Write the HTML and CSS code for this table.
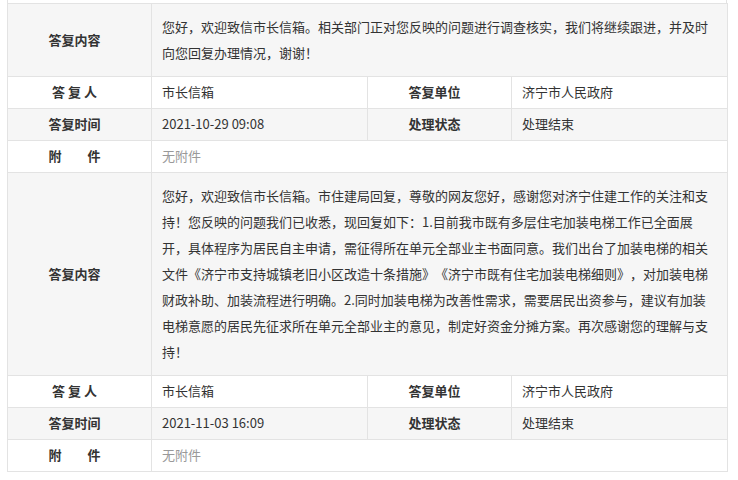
FILE: index.html
```html
<!DOCTYPE html>
<html lang="zh-CN">
<head>
    <meta charset="UTF-8">
    <meta name="viewport" content="width=device-width, initial-scale=1.0">
    <title>答复信息</title>
    <link rel="stylesheet" href="styles.css">
</head>
<body>
    <div class="container">
        <div class="top-edge"></div>
        <table class="reply-table">
            <colgroup>
                <col class="col-label">
                <col class="col-value">
                <col class="col-label">
                <col class="col-value">
            </colgroup>
            <!-- 第一次答复 -->
            <tr class="row-gray">
                <td class="label">答复内容</td>
                <td class="content" colspan="3"><div class="content-text">您好，欢迎致信市长信箱。相关部门正对您反映的问题进行调查核实，我们将继续跟进，并及时向您回复办理情况，谢谢！</div></td>
            </tr>
            <tr class="row-white small">
                <td class="label">答 复 人</td>
                <td class="value">市长信箱</td>
                <td class="label">答复单位</td>
                <td class="value">济宁市人民政府</td>
            </tr>
            <tr class="row-gray small">
                <td class="label">答复时间</td>
                <td class="value">2021-10-29 09:08</td>
                <td class="label">处理状态</td>
                <td class="value">处理结束</td>
            </tr>
            <tr class="row-white small">
                <td class="label">附　　件</td>
                <td class="value muted" colspan="3">无附件</td>
            </tr>
            <!-- 第二次答复 -->
            <tr class="row-gray">
                <td class="label">答复内容</td>
                <td class="content" colspan="3"><div class="content-text">您好，欢迎致信市长信箱。市住建局回复，尊敬的网友您好，感谢您对济宁住建工作的关注和支持！您反映的问题我们已收悉，现回复如下：1.目前我市既有多层住宅加装电梯工作已全面展开，具体程序为居民自主申请，需征得所在单元全部业主书面同意。我们出台了加装电梯的相关文件《济宁市支持城镇老旧小区改造十条措施》《济宁市既有住宅加装电梯细则》，对加装电梯财政补助、加装流程进行明确。2.同时加装电梯为改善性需求，需要居民出资参与，建议有加装电梯意愿的居民先征求所在单元全部业主的意见，制定好资金分摊方案。再次感谢您的理解与支持！</div></td>
            </tr>
            <tr class="row-white small">
                <td class="label">答 复 人</td>
                <td class="value">市长信箱</td>
                <td class="label">答复单位</td>
                <td class="value">济宁市人民政府</td>
            </tr>
            <tr class="row-gray small">
                <td class="label">答复时间</td>
                <td class="value">2021-11-03 16:09</td>
                <td class="label">处理状态</td>
                <td class="value">处理结束</td>
            </tr>
            <tr class="row-white small">
                <td class="label">附　　件</td>
                <td class="value muted" colspan="3">无附件</td>
            </tr>
        </table>
    </div>
</body>
</html>
```

FILE: styles.css
```css
body {
    margin: 0;
    background: #fff;
    font-family: "Noto Sans CJK SC", "Noto Sans", sans-serif;
    font-size: 13px;
    color: #333;
}
.container {
    padding-left: 7px;
}
.top-edge {
    width: 720px;
    height: 3px;
    border-left: 1px solid #e3e3e3;
    border-right: 1px solid #e3e3e3;
    box-sizing: border-box;
}
.reply-table {
    width: 720px;
    table-layout: fixed;
    border-collapse: collapse;
    text-spacing-trim: space-all;
}
.col-label {
    width: 144px;
}
.col-value {
    width: 216px;
}
.reply-table td {
    border: 1px solid #e3e3e3;
    line-height: 26px;
    padding: 10px 10px;
    vertical-align: middle;
}
.reply-table tr.small td {
    padding-top: 2px;
    padding-bottom: 3px;
}
.row-gray {
    background: #f6f6f6;
}
.row-white {
    background: #fff;
}
.reply-table td.label {
    font-weight: bold;
    text-align: center;
    padding-left: 0;
    padding-right: 10px;
    color: #333;
}
.reply-table td.content {
    text-align: left;
}
.content-text {
    width: 547px;
    text-spacing-trim: space-all;
}
.muted {
    color: #999;
}
```
